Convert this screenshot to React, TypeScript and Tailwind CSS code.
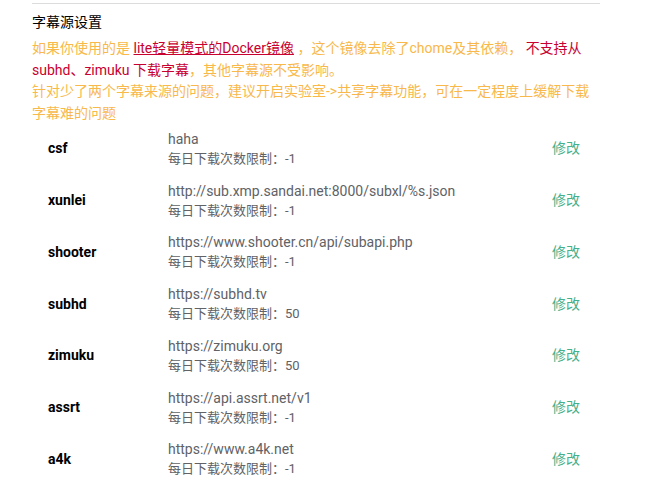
import React from "react";

const rows = [
  { name: "csf", url: "haha", limit: "-1" },
  { name: "xunlei", url: "http://sub.xmp.sandai.net:8000/subxl/%s.json", limit: "-1" },
  { name: "shooter", url: "https://www.shooter.cn/api/subapi.php", limit: "-1" },
  { name: "subhd", url: "https://subhd.tv", limit: "50" },
  { name: "zimuku", url: "https://zimuku.org", limit: "50" },
  { name: "assrt", url: "https://api.assrt.net/v1", limit: "-1" },
  { name: "a4k", url: "https://www.a4k.net", limit: "-1" },
];

export default function App() {
  return (
    <div
      className="min-h-[495px] bg-white"
      style={{ fontFamily: '"Roboto", "Noto Sans CJK SC", sans-serif' }}
    >
      <div className="ml-[32px] w-[568px] pt-[3px]">
        <div className="border-t border-[#dcdcdc]" />
        <div className="mt-[8px] text-[14px] leading-[20px] text-black">字幕源设置</div>
        <p className="mt-[6px] text-[14px] leading-[21.7px] text-[#f8b84a]">
          如果你使用的是{" "}
          <a className="text-[#c8002f] underline">lite轻量模式的Docker镜像</a> ，这个镜像去除了chome及其依赖，{" "}
          <span className="text-[#c8002f]">不支持从 subhd、zimuku 下载字幕</span>，其他字幕源不受影响。
          <br />
          针对少了两个字幕来源的问题，建议开启实验室-&gt;共享字幕功能，可在一定程度上缓解下载字幕难的问题
        </p>
        <div className="-mt-[2px] flex flex-col">
          {rows.map((r) => (
            <div key={r.name} className="flex h-[51.8px] items-center">
              <div className="w-[136px] pl-[16px] text-[14px] font-bold text-black">{r.name}</div>
              <div className="flex flex-1 flex-col text-[#606266]">
                <div className="text-[14px] leading-[20px]">{r.url}</div>
                <div className="text-[13px] leading-[20px]">每日下载次数限制：{r.limit}</div>
              </div>
              <div className="mr-[20px] text-[14px] text-[#45b08a]">修改</div>
            </div>
          ))}
        </div>
      </div>
    </div>
  );
}
